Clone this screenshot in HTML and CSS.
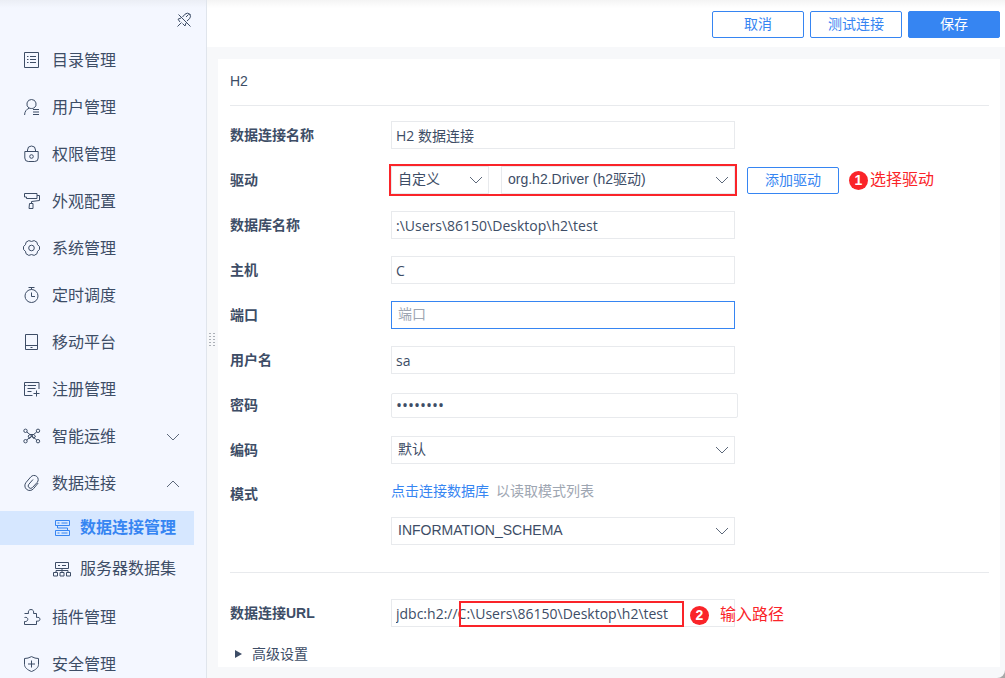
FILE: index.html
```html
<!DOCTYPE html>
<html lang="zh-CN">
<head>
    <meta charset="UTF-8">
    <meta name="viewport" content="width=device-width, initial-scale=1.0">
    <title>数据连接管理</title>
    <link rel="stylesheet" href="styles.css">
</head>
<body>
    <div class="layout">
        <aside class="sidebar">
            <button class="pin" type="button" aria-label="取消固定">
                <svg class="icon" viewBox="0 0 16 16">
                    <path d="M2.500 2.500l12 12M6.500 5l2.500-2.800q2.500-2 4.500-.2 2 2.200.2 4.500L11 9M5 6L2 7.200 4 10M6.500 11.500l2.500 2.500 1-3M1.500 14.500l4-4M10 5l2.500-2.500M13 1.500l1.500 1.500"/>
                </svg>
            </button>
            <nav class="menu">
                <a class="menu-item" href="#">
                    <svg class="icon" viewBox="0 0 16 16">
                        <path d="M.5 .5h14v15H.5zM3 4.500h1.500M3 7.500h1.500M3 10.500h1.500M6 4.500h6M6 7.500h6M6 10.500h6"/>
                    </svg>
                    <span>目录管理</span>
                </a>
                <a class="menu-item" href="#">
                    <svg class="icon" viewBox="0 0 16 16">
                        <path d="M7.500 .5a4.600 4.600 0 0 1 2.300 8.600c-.8.500-3.800.5-4.600 0A4.600 4.600 0 0 1 7.500.5zM5.200 9.200C2.500 10.200.6 12.500.6 16M9 10.500h6M9 13h6M9 15.500h6"/>
                    </svg>
                    <span>用户管理</span>
                </a>
                <a class="menu-item" href="#">
                    <svg class="icon" viewBox="0 0 16 16">
                        <path d="M.8 5.500h13.400v6.500a3.500 3.500 0 0 1-3.500 3.500H4.300a3.500 3.500 0 0 1-3.500-3.500zM3.500 5.500V4a4 4 0 0 1 8 0v1.500"/>
                        <circle cx="7.500" cy="10.500" r="1.800"/>
                    </svg>
                    <span>权限管理</span>
                </a>
                <a class="menu-item" href="#">
                    <svg class="icon" viewBox="0 0 16 16">
                        <path d="M.5 4V.5h12.500v5H2.500V4H.5M13 2.500h2.500v5L7.500 8.500v2M5.500 10.500h3.500v5H5z"/>
                    </svg>
                    <span>外观配置</span>
                </a>
                <a class="menu-item" href="#">
                    <svg class="icon" viewBox="0 0 16 16">
                        <path d="M4.800.6Q7.500 2.300 10.200.6l2.800 1.700q-.2 2.700 2.500 4.200v3q-2.700 1.500-2.500 4.200l-2.800 1.700q-2.700-1.700-5.400 0L2 13.700Q2.200 11-.5 9.500v-3Q2.200 5 2 2.300z"/>
                        <circle cx="7.500" cy="8" r="2.800"/>
                    </svg>
                    <span>系统管理</span>
                </a>
                <a class="menu-item" href="#">
                    <svg class="icon" viewBox="0 0 16 16">
                        <circle cx="7.500" cy="9" r="6.500"/>
                        <path d="M4.500 .5h6M7.500 .5v2M7.500 5.500V9.500h3.500"/>
                    </svg>
                    <span>定时调度</span>
                </a>
                <a class="menu-item" href="#">
                    <svg class="icon" viewBox="0 0 16 16">
                        <path d="M1.500 .5h12v15h-12zM1.500 11.500h12M6.500 13.500h2"/>
                    </svg>
                    <span>移动平台</span>
                </a>
                <a class="menu-item" href="#">
                    <svg class="icon" viewBox="0 0 16 16">
                        <path d="M8.500 14.500h-8v-13h14.500V8M.5 4.500h2M3.500 4.500h8.500M3.500 7.500h8M3.500 10.500h4M12.500 9.500v6M9.500 12.500h6"/>
                    </svg>
                    <span>注册管理</span>
                </a>
                <a class="menu-item" href="#">
                    <svg class="icon" viewBox="0 0 16 16">
                        <circle cx="1.500" cy="2.800" r="1.700"/>
                        <circle cx="14" cy="2.800" r="1.700"/>
                        <circle cx="1.500" cy="13.200" r="1.700"/>
                        <circle cx="14" cy="13.200" r="1.700"/>
                        <path d="M2.800 4l10 8M12.700 4l-10 8M6 6.500L4 8l1.500 2.500 2.200-2 2.300 2L11.500 8l-2-1.500z"/>
                    </svg>
                    <span>智能运维</span>
                    <svg class="arrow" viewBox="0 0 14 8"><path d="M1 1l6 6 6-6"/></svg>
                </a>
                <a class="menu-item" href="#">
                    <svg class="icon" viewBox="0 0 16 16">
                        <path d="M14.200 8l-4.700 5.700a4.900 4.900 0 0 1-7 .6 4.900 4.900 0 0 1-.5-6.800L6.800 1.900a4.200 4.200 0 0 1 6.400 5.500L8.500 12.500a2.400 2.400 0 0 1-3.700-3.200L9 4.500"/>
                    </svg>
                    <span>数据连接</span>
                    <svg class="arrow" viewBox="0 0 14 8"><path d="M1 7l6-6 6 6"/></svg>
                </a>
                <div class="submenu">
                    <a class="menu-item sub active" href="#">
                        <svg class="icon" viewBox="0 0 16 16">
                            <path d="M1.500 .5h14v5h-14zM1.500 10.500h14v5h-14zM3.500 5.500v2.500h10v2.500M3.500 3h2M7.500 3h6M3.500 13h2M7.500 13h6"/>
                        </svg>
                        <span>数据连接管理</span>
                    </a>
                    <a class="menu-item sub" href="#">
                        <svg class="icon" viewBox="0 0 16 16">
                            <path d="M1.500 1.500h13v6h-13zM4 4.500h2M8 4.500h4M8 7.500v4M2 11.500v-2h12v2M-.5 11.500h4v3.500h-4zM6 11.500h4v3.500H6zM12.500 11.500h4v3.500h-4z"/>
                        </svg>
                        <span>服务器数据集</span>
                    </a>
                </div>
                <a class="menu-item" href="#">
                    <svg class="icon" viewBox="0 0 16 16">
                        <path d="M.5 4.500h4C3.800 2.200 5 .5 7 .5s3.200 1.700 2.500 4h3v4c2-.6 3.500.3 3.500 1.700s-1.500 2.400-3.500 1.800v3.500H.5v-3c2 .3 3.300-.7 3.300-2.200S2.500 8 .5 8.500"/>
                    </svg>
                    <span>插件管理</span>
                </a>
                <a class="menu-item" href="#">
                    <svg class="icon" viewBox="0 0 16 16">
                        <path d="M7.500 .6q3.500 2 7 1.900v6c0 3-3 5.500-7 7-4-1.500-7-4-7-7v-6Q4 2.600 7.500 .6zM7.500 4.500v7M4 8h7"/>
                    </svg>
                    <span>安全管理</span>
                </a>
            </nav>
        </aside>

        <main class="main">
            <svg class="grip" viewBox="0 0 6 14">
                <path d="M1 0v14M5 0v14"/>
            </svg>
            <header class="toolbar">
                <button class="btn" type="button">取消</button>
                <button class="btn" type="button">测试连接</button>
                <button class="btn primary" type="button">保存</button>
            </header>

            <form class="card">
                <h1 class="card-title">H2</h1>

                <div class="form-rows">
                    <div class="row">
                        <label class="label" for="connName">数据连接名称</label>
                        <input class="input" id="connName" type="text" value="H2 数据连接">
                    </div>
                    <div class="row">
                        <label class="label" for="driverType">驱动</label>
                        <div class="driver marked">
                            <div class="select-box short">
                                <select class="select" id="driverType"><option>自定义</option></select>
                                <svg class="arrow" viewBox="0 0 14 8"><path d="M1 1l6 6 6-6"/></svg>
                            </div>
                            <div class="select-box">
                                <select class="select" id="driverClass" aria-label="驱动类"><option>org.h2.Driver (h2驱动)</option></select>
                                <svg class="arrow" viewBox="0 0 14 8"><path d="M1 1l6 6 6-6"/></svg>
                            </div>
                        </div>
                        <button class="btn add-driver" type="button">添加驱动</button>
                        <div class="note"><span class="badge">1</span>选择驱动</div>
                    </div>
                    <div class="row">
                        <label class="label" for="dbName">数据库名称</label>
                        <input class="input" id="dbName" type="text" value=":\Users\86150\Desktop\h2\test">
                    </div>
                    <div class="row">
                        <label class="label" for="host">主机</label>
                        <input class="input" id="host" type="text" value="C">
                    </div>
                    <div class="row">
                        <label class="label" for="port">端口</label>
                        <input class="input current" id="port" type="text" placeholder="端口">
                    </div>
                    <div class="row">
                        <label class="label" for="user">用户名</label>
                        <input class="input" id="user" type="text" value="sa">
                    </div>
                    <div class="row">
                        <label class="label" for="password">密码</label>
                        <input class="input password" id="password" type="password" value="12345678">
                    </div>
                    <div class="row">
                        <label class="label" for="encoding">编码</label>
                        <div class="select-box">
                            <select class="select" id="encoding"><option>默认</option></select>
                            <svg class="arrow" viewBox="0 0 14 8"><path d="M1 1l6 6 6-6"/></svg>
                        </div>
                    </div>
                    <div class="row top">
                        <label class="label" for="schema">模式</label>
                        <div class="schema">
                            <p class="hint"><a class="link" href="#">点击连接数据库</a><span>以读取模式列表</span></p>
                            <div class="select-box">
                                <select class="select" id="schema"><option>INFORMATION_SCHEMA</option></select>
                                <svg class="arrow" viewBox="0 0 14 8"><path d="M1 1l6 6 6-6"/></svg>
                            </div>
                        </div>
                    </div>
                </div>

                <div class="url-section">
                    <div class="row">
                        <label class="label" for="url">数据连接URL</label>
                        <div class="url-box">
                            <input class="input" id="url" type="text" value="jdbc:h2://C:\Users\86150\Desktop\h2\test">
                            <span class="url-mark"></span>
                            <div class="note url-note"><span class="badge">2</span>输入路径</div>
                        </div>
                    </div>
                    <button class="advanced" type="button">
                        <svg class="triangle" viewBox="0 0 7 8"><path d="M0 0l7 4-7 4z"/></svg>
                        高级设置
                    </button>
                </div>
            </form>
        </main>
    </div>
</body>
</html>
```

FILE: styles.css
```css
* {
    box-sizing: border-box;
}

body {
    margin: 0;
    background: #a8a8a8;
    color: #3d4d66;
    font-family: "Liberation Sans", "Noto Sans CJK SC", sans-serif;
    font-size: 14px;
    line-height: 20px;
}

button,
input,
select {
    font: inherit;
    color: inherit;
}

svg {
    display: block;
    flex: none;
    fill: none;
    stroke: currentColor;
}

.layout {
    display: flex;
    height: 100vh;
    overflow: hidden;
    border-bottom-right-radius: 8px;
    background: #f7f8fa;
}

/* 左侧菜单 */
.sidebar {
    flex: none;
    width: 207px;
    background: linear-gradient(#ebeef5, #f4f7ff 8px);
    border-right: 1px solid #e0e5ec;
}

.pin {
    display: block;
    margin: 12px 14px 9px auto;
    padding: 0;
    border: 0;
    background: none;
}

.icon {
    width: 16px;
    height: 16px;
    overflow: visible;
}

.menu-item {
    display: flex;
    align-items: center;
    gap: 12px;
    height: 47px;
    padding: 0 26px 0 24px;
    color: #3d4d66;
    font-size: 16px;
    line-height: 24px;
    text-decoration: none;
}

.menu-item .icon {
    margin-bottom: 1px;
}

.arrow {
    width: 14px;
    height: 8px;
    margin-left: auto;
    color: #5c687a;
}

.submenu {
    display: flex;
    flex-direction: column;
    gap: 7px;
    padding: 4px 12px 8px 0;
}

.menu-item.sub {
    gap: 10px;
    height: 34px;
    padding: 0 0 0 54px;
}

.sub .icon {
    margin: 0;
}

.menu-item.active {
    background: #d6e7ff;
    color: #3685f2;
    font-weight: bold;
}

/* 右侧内容 */
.main {
    position: relative;
    display: flex;
    flex: 1;
    flex-direction: column;
    min-width: 0;
}

.grip {
    position: absolute;
    top: 333px;
    left: 2px;
    width: 6px;
    height: 14px;
    color: #606874;
    stroke-width: 1;
    stroke-dasharray: 1 2;
}

.toolbar {
    display: flex;
    justify-content: flex-end;
    gap: 6px;
    height: 47px;
    padding: 11px 5px 9px;
    background: linear-gradient(#f4f4f4, #fff 8px);
}

.btn {
    width: 92px;
    height: 27px;
    padding: 0 0 1px;
    border: 1px solid #3685f2;
    border-radius: 2px;
    background: #fff;
    color: #3685f2;
}

.btn.primary {
    background: #3685f2;
    color: #fff;
}

.card {
    flex: 1;
    margin: 12px 5px 11px 11px;
    padding: 0 11px 0 12px;
    background: #fff;
}

.card-title {
    margin: 0;
    padding: 12px 0 14px;
    border-bottom: 1px solid #e8eaed;
    font-size: 14px;
    font-weight: normal;
}

.form-rows {
    display: flex;
    flex-direction: column;
    gap: 17px;
    padding: 15px 0 27px;
    border-bottom: 1px solid #e8eaed;
}

.row {
    display: flex;
    align-items: center;
    height: 28px;
}

.row.top {
    align-items: flex-start;
    height: auto;
}

.label {
    flex: none;
    width: 161px;
    padding-bottom: 1px;
    font-weight: bold;
}

.row.top .label {
    padding-top: 3px;
}

.input,
.select {
    width: 344px;
    height: 28px;
    border: 1px solid #e8eaed;
    border-radius: 0;
    background: #fff;
    outline: none;
}

.input {
    padding: 0 4px;
    font-family: "Open Sans", "Noto Sans CJK SC", sans-serif;
}

.input.current {
    padding: 0 6px 3px;
    border-color: #3685f2;
}

.input::placeholder {
    color: #9ea6b2;
}

.input.password {
    width: 347px;
    height: 25px;
    border-radius: 2px;
    font-size: 16px;
}

.select {
    width: 100%;
    padding: 0 6px 2px;
    appearance: none;
}

.select-box {
    position: relative;
    width: 344px;
}

.select-box .arrow {
    position: absolute;
    top: 10px;
    right: 6px;
    pointer-events: none;
}

.driver {
    display: flex;
    gap: 12px;
    width: 344px;
}

.driver .select-box {
    flex: 1;
}

.driver .select-box.short {
    flex: none;
    width: 98px;
}

.marked {
    outline: 2px solid #fa2429;
}

.add-driver {
    margin-left: 12px;
}

.note {
    display: flex;
    align-items: center;
    gap: 2px;
    margin-left: 10px;
    color: #fa2429;
    font-size: 16px;
}

.badge {
    width: 19px;
    height: 19px;
    border-radius: 50%;
    background: #fa2429;
    color: #fff;
    font-size: 14px;
    font-weight: bold;
    line-height: 19px;
    text-align: center;
}

.schema {
    display: flex;
    flex-direction: column;
    gap: 16px;
}

.hint {
    display: flex;
    gap: 7px;
    margin: 0;
    color: #9ea6b2;
}

.link {
    color: #3685f2;
    text-decoration: none;
}

.url-section {
    padding-top: 26px;
}

.url-box {
    position: relative;
}

/* 标出需要填写的路径 */
.url-mark {
    position: absolute;
    top: 2px;
    left: 68px;
    width: 225px;
    height: 26px;
    border: 2px solid #fa2429;
}

.url-note {
    position: absolute;
    top: 6px;
    left: 299px;
    gap: 11px;
    margin: 0;
    white-space: nowrap;
}

.advanced {
    display: flex;
    align-items: center;
    gap: 10px;
    margin-top: 17px;
    padding: 0 5px;
    border: 0;
    background: none;
}

.triangle {
    width: 7px;
    height: 8px;
    fill: currentColor;
    stroke: none;
}
```
